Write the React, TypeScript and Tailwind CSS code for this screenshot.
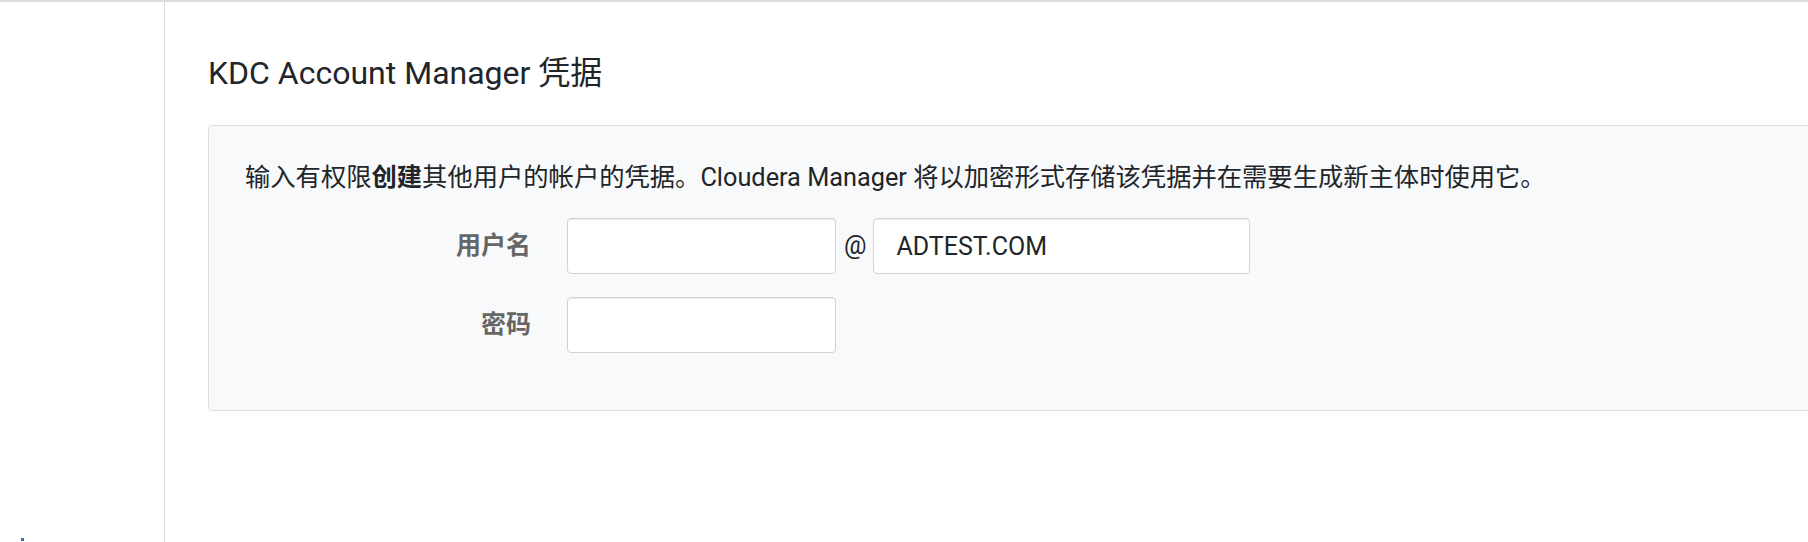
import React from "react";

export default function App() {
  const font = "font-['Roboto','Noto_Sans_CJK_SC',sans-serif]";
  return (
    <div className={`w-[1808px] h-[542px] bg-white flex flex-col overflow-hidden ${font}`}>
      <div className="h-[2px] bg-[#dedede] shrink-0" />
      <div className="flex flex-1 min-h-0">
        <aside className="w-[165px] shrink-0 border-r border-[#dcdcdc] flex flex-col justify-end pl-[21px] pb-[1px]">
          <div className="w-[3px] h-[3px] bg-[#3a6ea5]" />
        </aside>
        <main className="flex-1 min-w-0 overflow-hidden pl-[43px] pt-[53px]">
          <h1 className="text-[32px] leading-[36px] text-[#212529] font-normal whitespace-nowrap">
            KDC Account Manager 凭据
          </h1>
          <div className="mt-[34px] w-[1620px] bg-[#f8f9fa] border border-[#dcdcdc] rounded-[4px] pl-[36px] pt-[33px] pb-[57px]">
            <p className="text-[25.3px] leading-[37px] text-[#212529] whitespace-nowrap">
              输入有权限<span className="font-bold">创建</span>其他用户的帐户的凭据。Cloudera Manager
              将以加密形式存储该凭据并在需要生成新主体时使用它。
            </p>
            <div className="mt-[22px] flex flex-col gap-[23px]">
              <div className="flex items-center">
                <label className="w-[286px] text-right text-[25px] font-semibold text-[#666]">
                  用户名
                </label>
                <input
                  type="text"
                  className="ml-[36px] w-[269px] h-[56px] bg-white border border-[#d2d2d2] rounded-[4px] shadow-[inset_0_1px_1px_rgba(0,0,0,0.075)] outline-none"
                />
                <span className="ml-[8px] mr-[7px] text-[25px] text-[#212529]">@</span>
                <input
                  type="text"
                  defaultValue="ADTEST.COM"
                  className="w-[377px] h-[56px] bg-white border border-[#d2d2d2] rounded-[4px] px-[22px] text-[25px] text-[#212529] shadow-[inset_0_1px_1px_rgba(0,0,0,0.075)] outline-none"
                />
              </div>
              <div className="flex items-center">
                <label className="w-[286px] text-right text-[25px] font-semibold text-[#666]">
                  密码
                </label>
                <input
                  type="password"
                  className="ml-[36px] w-[269px] h-[56px] bg-white border border-[#d2d2d2] rounded-[4px] shadow-[inset_0_1px_1px_rgba(0,0,0,0.075)] outline-none"
                />
              </div>
            </div>
          </div>
        </main>
      </div>
    </div>
  );
}
